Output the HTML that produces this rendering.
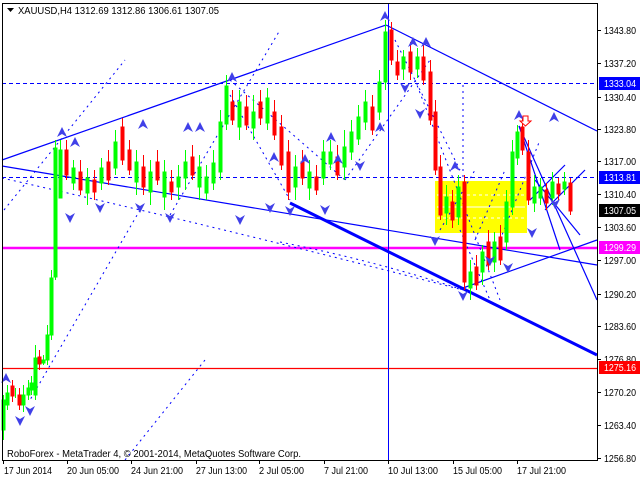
<!DOCTYPE html>
<html><head><meta charset="utf-8"><style>
html,body{margin:0;padding:0;background:#fff;width:640px;height:480px;overflow:hidden}
svg{display:block;font-family:"Liberation Sans",sans-serif}
</style></head><body>
<svg width="640" height="480" viewBox="0 0 640 480" xmlns="http://www.w3.org/2000/svg">
<rect width="640" height="480" fill="#fff"/>
<rect x="435" y="181" width="92" height="52" fill="#ffff00"/>
<g stroke="#fff" stroke-dasharray="3,3"><line x1="437" y1="195" x2="525" y2="195"/><line x1="437" y1="218" x2="525" y2="218"/></g>
<line x1="437" y1="207" x2="525" y2="207" stroke="#fff"/>
<line x1="2" y1="83.5" x2="597" y2="83.5" stroke="#0000ff" stroke-dasharray="4,3"/>
<line x1="2" y1="177.5" x2="597" y2="177.5" stroke="#0000ff" stroke-dasharray="4,3"/>
<line x1="2" y1="248" x2="597" y2="248" stroke="#ff00ff" stroke-width="2.5"/>
<line x1="2" y1="368.5" x2="597" y2="368.5" stroke="#ff0000" stroke-width="1.2"/>
<line x1="388.5" y1="3" x2="388.5" y2="460" stroke="#0000ff"/>
<g stroke="#0000ff" fill="none" stroke-width="1.2">
<line x1="2" y1="160" x2="386" y2="25"/>
<line x1="386" y1="25" x2="597" y2="131"/>
<line x1="2" y1="166" x2="597" y2="265"/>
<line x1="463" y1="288" x2="597" y2="240"/>
<line x1="519" y1="126" x2="597" y2="300"/>
<line x1="519" y1="126" x2="560" y2="250"/>
<line x1="530" y1="200" x2="565" y2="165"/>
<line x1="535" y1="180" x2="580" y2="235"/>
<line x1="545" y1="210" x2="585" y2="170"/>
<line x1="290" y1="203" x2="597" y2="355" stroke-width="3"/>
</g>
<g stroke="#0000ff" fill="none" stroke-dasharray="2,4" stroke-width="1">
<path d="M2 178 Q240 232 463 290"/>
<path d="M280 242 Q380 262 463 290"/>
<line x1="4" y1="210" x2="125" y2="60"/>
<line x1="125" y1="460" x2="205" y2="360"/>
<line x1="170" y1="215" x2="280" y2="30"/>
<line x1="140" y1="210" x2="30" y2="400"/>
<line x1="230" y1="95" x2="290" y2="200"/>
<line x1="230" y1="80" x2="345" y2="180"/>
<line x1="345" y1="180" x2="430" y2="60"/>
<line x1="395" y1="40" x2="460" y2="170"/>
<line x1="415" y1="80" x2="500" y2="300"/>
<line x1="463" y1="85" x2="463" y2="180"/>
<line x1="440" y1="230" x2="475" y2="170"/>
<line x1="475" y1="240" x2="505" y2="170"/>
<line x1="500" y1="240" x2="540" y2="140"/>
<line x1="460" y1="230" x2="490" y2="300"/>
</g>
<g fill="#00ff00" stroke="#00ff00">
<path d="M3.5 395V440M7.5 385V410M15.5 388V398M23.5 385V412M28.5 380V400M31.5 376V395M35.5 345V400M43.5 355V365M47.5 325V365M51.5 270V340M55.5 140V280M60.5 140V195M73.5 160V190M87.5 168V205M101.5 158V190M115.5 130V175M136.5 150V195M150.5 160V205M164.5 160V210M178.5 165V200M185.5 150V190M199.5 155V200M206.5 165V200M213.5 150V190M220.5 110V180M226.5 75V130M239.5 90V140M253.5 95V140M267.5 88V130M295.5 155V200M309.5 160V200M323.5 140V185M330.5 140V170M344.5 130V180M351.5 120V160M358.5 105V145M365.5 90V130M379.5 70V120M385.5 20V90M403.5 50V80M417.5 48V78M446.5 185V225M458.5 175V225M470.5 260V300M482.5 245V285M494.5 232V272M506.5 190V250M512.5 140V215M517.5 125V165M534.5 175V212M540.5 178V205M552.5 172V205M564.5 172V195"/>
<path d="M2 400h3v30h-3zM6 393h3v12h-3zM22 395h3v10h-3zM27 388h3v7h-3zM30 383h3v7h-3zM34 358h3v37h-3zM42 360h3v3h-3zM46 335h3v25h-3zM50 278h3v57h-3zM54 148h3v129h-3zM59 150h3v48h-3zM72 168h3v15h-3zM86 178h3v15h-3zM100 168h3v15h-3zM114 142h3v26h-3zM135 162h3v20h-3zM149 172h3v20h-3zM163 172h3v25h-3zM177 177h3v10h-3zM184 162h3v16h-3zM198 167h3v20h-3zM205 177h3v16h-3zM212 163h3v20h-3zM219 122h3v50h-3zM225 86h3v38h-3zM238 102h3v25h-3zM252 112h3v16h-3zM266 98h3v25h-3zM294 167h3v20h-3zM308 172h3v16h-3zM322 152h3v26h-3zM329 152h3v12h-3zM343 147h3v20h-3zM350 132h3v20h-3zM357 117h3v22h-3zM364 102h3v20h-3zM378 82h3v30h-3zM384 32h3v50h-3zM402 57h3v12h-3zM416 57h3v12h-3zM445 197h3v16h-3zM457 187h3v30h-3zM469 272h3v16h-3zM481 252h3v20h-3zM493 242h3v20h-3zM505 202h3v40h-3zM511 152h3v55h-3zM516 132h3v26h-3zM533 187h3v16h-3zM539 187h3v11h-3zM551 182h3v16h-3zM563 182h3v7h-3z"/>
</g>
<g fill="#ff0000" stroke="#ff0000">
<path d="M12.5 380V402M19.5 388V410M39.5 350V370M66.5 140V180M80.5 160V195M94.5 170V200M108.5 150V185M122.5 118V165M129.5 140V175M143.5 155V195M157.5 150V185M171.5 170V200M192.5 145V180M232.5 90V125M246.5 95V130M260.5 90V125M274.5 100V140M281.5 115V170M288.5 140V200M302.5 150V185M316.5 165V195M337.5 145V180M372.5 95V135M391.5 22V65M397.5 50V80M410.5 42V80M423.5 45V85M430.5 60V125M435.5 100V175M440.5 155V220M452.5 190V228M464.5 175V290M476.5 255V290M488.5 230V270M500.5 225V265M522.5 118V155M528.5 140V205M546.5 183V210M558.5 178V200M570.5 178V215"/>
<path d="M11 386h3v10h-3zM18 395h3v10h-3zM38 357h3v7h-3zM65 150h3v25h-3zM79 172h3v18h-3zM93 180h3v12h-3zM107 162h3v18h-3zM121 127h3v33h-3zM128 150h3v20h-3zM142 167h3v20h-3zM156 162h3v18h-3zM170 182h3v10h-3zM191 157h3v18h-3zM231 102h3v18h-3zM245 107h3v18h-3zM259 102h3v16h-3zM273 112h3v23h-3zM280 127h3v38h-3zM287 152h3v40h-3zM301 162h3v16h-3zM315 177h3v13h-3zM336 157h3v18h-3zM371 107h3v23h-3zM390 30h3v30h-3zM396 62h3v13h-3zM409 52h3v20h-3zM422 57h3v23h-3zM429 72h3v48h-3zM434 112h3v58h-3zM439 167h3v48h-3zM451 202h3v18h-3zM463 182h3v100h-3zM475 267h3v18h-3zM487 242h3v23h-3zM499 237h3v23h-3zM521 127h3v23h-3zM527 152h3v48h-3zM545 190h3v13h-3zM557 184h3v10h-3zM569 183h3v28h-3z"/>
</g>
<g fill="#4040e8">
<path d="M62 127l5 10-5-3-5 3z M143 119l5 10-5-3-5 3z M188 122l5 10-5-3-5 3z M232 72l5 10-5-3-5 3z M305 154l5 10-5-3-5 3z M331 132l5 10-5-3-5 3z M385 11l5 10-5-3-5 3z M413 37l5 10-5-3-5 3z M426 37l5 10-5-3-5 3z M455 161l5 10-5-3-5 3z M519 110l5 10-5-3-5 3z M554 112l5 10-5-3-5 3z M6 373l5 10-5-3-5 3z M380 122l5 10-5-3-5 3z M338 154l5 10-5-3-5 3z M75 137l5 10-5-3-5 3z M200 122l5 10-5-3-5 3z M274 152l5 10-5-3-5 3z"/>
<path d="M70 223l-5-10 5 3 5-3z M100 213l-5-10 5 3 5-3z M140 213l-5-10 5 3 5-3z M170 223l-5-10 5 3 5-3z M290 216l-5-10 5 3 5-3z M360 171l-5-10 5 3 5-3z M435 246l-5-10 5 3 5-3z M463 301l-5-10 5 3 5-3z M490 266l-5-10 5 3 5-3z M508 273l-5-10 5 3 5-3z M532 238l-5-10 5 3 5-3z M555 209l-5-10 5 3 5-3z M30 416l-5-10 5 3 5-3z M20 426l-5-10 5 3 5-3z M405 93l-5-10 5 3 5-3z M420 119l-5-10 5 3 5-3z M325 215l-5-10 5 3 5-3z M270 213l-5-10 5 3 5-3z M240 225l-5-10 5 3 5-3z"/>
</g>
<path d="M523 116h5v5h3l-5.5 5-5.5-5h3z" fill="#fff" stroke="#ff0000"/>
<rect x="2.5" y="3.5" width="595" height="457" fill="none" stroke="#000"/>
<path d="M7 8h7l-3.5 4z" fill="#000"/>
<text x="18" y="14" font-size="10" fill="#000" textLength="201" lengthAdjust="spacingAndGlyphs">XAUUSD,H4  1312.69 1312.86 1306.61 1307.05</text>
<text x="7" y="457" font-size="10" fill="#000" textLength="294" lengthAdjust="spacingAndGlyphs">RoboForex - MetaTrader 4, © 2001-2014, MetaQuotes Software Corp.</text>
<g font-size="10" fill="#000">
<g stroke="#000"><path d="M597 30.5h4M597 63.5h4M597 97.5h4M597 129.5h4M597 161.5h4M597 194.5h4M597 227.5h4M597 260.5h4M597 294.5h4M597 326.5h4M597 359.5h4M597 392.5h4M597 425.5h4M597 458.5h4"/></g>
<text x="604" y="34" textLength="32" lengthAdjust="spacingAndGlyphs">1343.80</text><text x="604" y="67" textLength="32" lengthAdjust="spacingAndGlyphs">1337.20</text><text x="604" y="101" textLength="32" lengthAdjust="spacingAndGlyphs">1330.40</text>
<text x="604" y="133" textLength="32" lengthAdjust="spacingAndGlyphs">1323.80</text><text x="604" y="165" textLength="32" lengthAdjust="spacingAndGlyphs">1317.00</text><text x="604" y="198" textLength="32" lengthAdjust="spacingAndGlyphs">1310.40</text>
<text x="604" y="231" textLength="32" lengthAdjust="spacingAndGlyphs">1303.60</text><text x="604" y="264" textLength="32" lengthAdjust="spacingAndGlyphs">1297.00</text><text x="604" y="298" textLength="32" lengthAdjust="spacingAndGlyphs">1290.20</text>
<text x="604" y="330" textLength="32" lengthAdjust="spacingAndGlyphs">1283.60</text><text x="604" y="363" textLength="32" lengthAdjust="spacingAndGlyphs">1276.80</text><text x="604" y="396" textLength="32" lengthAdjust="spacingAndGlyphs">1270.20</text>
<text x="604" y="429" textLength="32" lengthAdjust="spacingAndGlyphs">1263.40</text><text x="604" y="462" textLength="32" lengthAdjust="spacingAndGlyphs">1256.80</text>
</g>
<g font-size="10" fill="#fff">
<rect x="599" y="77" width="41" height="13" fill="#0000ff"/><text x="604" y="87" textLength="32" lengthAdjust="spacingAndGlyphs">1333.04</text>
<rect x="599" y="171" width="41" height="13" fill="#0000ff"/><text x="604" y="181" textLength="32" lengthAdjust="spacingAndGlyphs">1313.81</text>
<rect x="599" y="204" width="41" height="13" fill="#000"/><text x="604" y="214" textLength="32" lengthAdjust="spacingAndGlyphs">1307.05</text>
<rect x="599" y="241" width="41" height="13" fill="#ff00ff"/><text x="604" y="251" textLength="32" lengthAdjust="spacingAndGlyphs">1299.29</text>
<rect x="599" y="361" width="41" height="13" fill="#ff0000"/><text x="604" y="371" textLength="32" lengthAdjust="spacingAndGlyphs">1275.16</text>
</g>
<g stroke="#000"><path d="M3.5 460v4M67.5 460v4M131.5 460v4M196.5 460v4M259.5 460v4M324.5 460v4M388.5 460v4M453.5 460v4M517.5 460v4"/></g>
<g font-size="10" fill="#000">
<text x="4" y="474" textLength="48" lengthAdjust="spacingAndGlyphs">17 Jun 2014</text>
<text x="67" y="474" textLength="52" lengthAdjust="spacingAndGlyphs">20 Jun 05:00</text>
<text x="131" y="474" textLength="52" lengthAdjust="spacingAndGlyphs">24 Jun 21:00</text>
<text x="196" y="474" textLength="51" lengthAdjust="spacingAndGlyphs">27 Jun 13:00</text>
<text x="259" y="474" textLength="45" lengthAdjust="spacingAndGlyphs">2 Jul 05:00</text>
<text x="324" y="474" textLength="44" lengthAdjust="spacingAndGlyphs">7 Jul 21:00</text>
<text x="388" y="474" textLength="50" lengthAdjust="spacingAndGlyphs">10 Jul 13:00</text>
<text x="453" y="474" textLength="49" lengthAdjust="spacingAndGlyphs">15 Jul 05:00</text>
<text x="517" y="474" textLength="49" lengthAdjust="spacingAndGlyphs">17 Jul 21:00</text>
</g>
</svg>
</body></html>
